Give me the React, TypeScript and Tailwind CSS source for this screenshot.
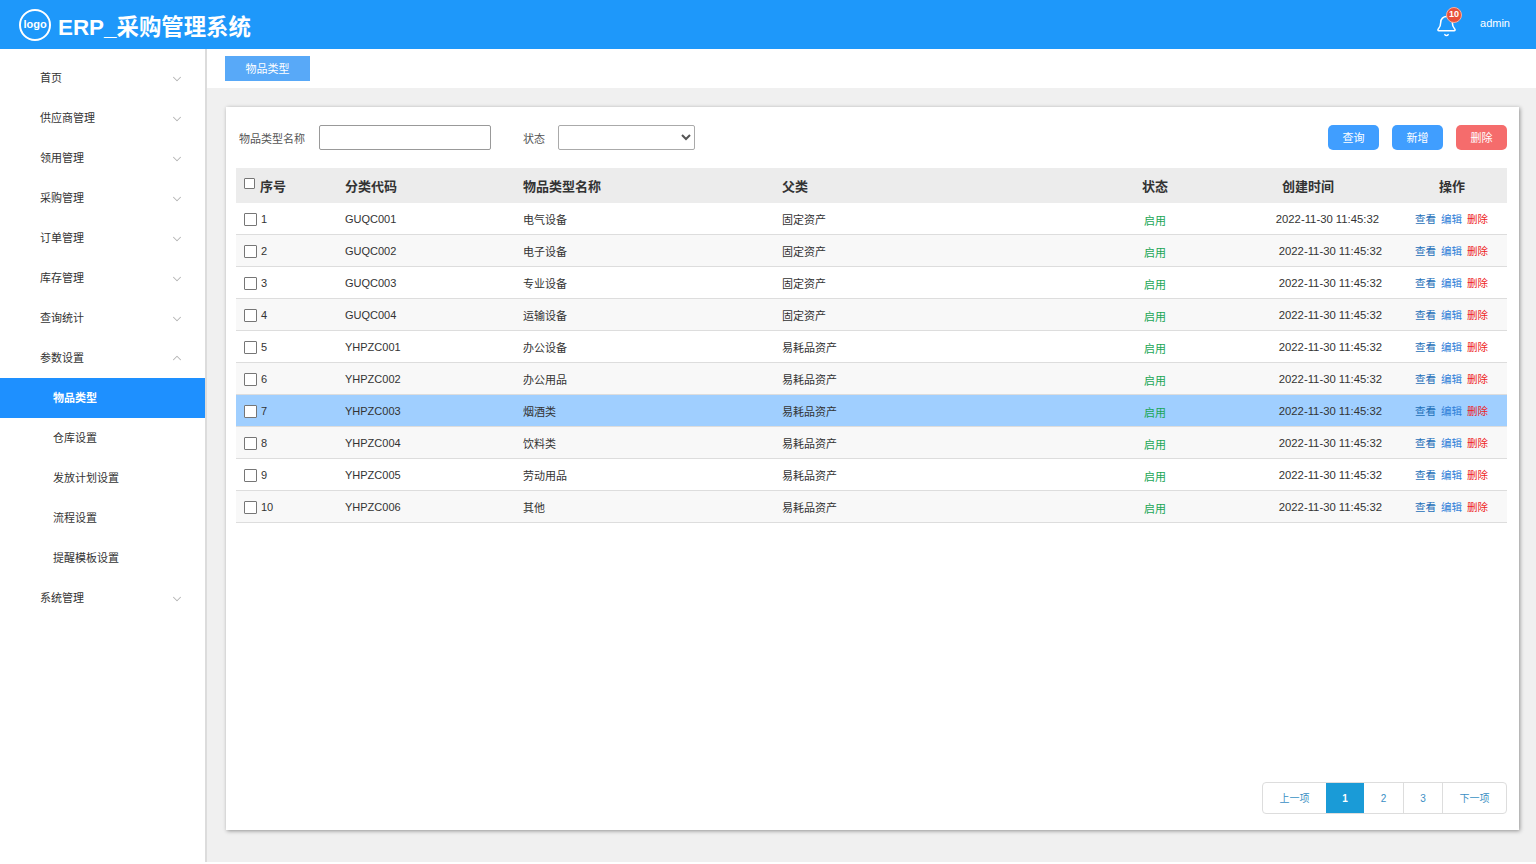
import { Bell, ChevronDown, ChevronUp } from "lucide-react";

const font = "font-['Liberation_Sans','Noto_Sans_CJK_SC',sans-serif]";

const menu: { label: string; open?: boolean; children?: string[] }[] = [
  { label: "首页" },
  { label: "供应商管理" },
  { label: "领用管理" },
  { label: "采购管理" },
  { label: "订单管理" },
  { label: "库存管理" },
  { label: "查询统计" },
  { label: "参数设置", open: true, children: ["物品类型", "仓库设置", "发放计划设置", "流程设置", "提醒模板设置"] },
  { label: "系统管理" },
];

const rows = [
  ["GUQC001", "电气设备", "固定资产"],
  ["GUQC002", "电子设备", "固定资产"],
  ["GUQC003", "专业设备", "固定资产"],
  ["GUQC004", "运输设备", "固定资产"],
  ["YHPZC001", "办公设备", "易耗品资产"],
  ["YHPZC002", "办公用品", "易耗品资产"],
  ["YHPZC003", "烟酒类", "易耗品资产"],
  ["YHPZC004", "饮料类", "易耗品资产"],
  ["YHPZC005", "劳动用品", "易耗品资产"],
  ["YHPZC006", "其他", "易耗品资产"],
];

function Sidebar() {
  return (
    <aside className="w-[207px] shrink-0 bg-white border-r-2 border-[#dcdcdc] pt-[9px]">
      {menu.map((m) => (
        <div key={m.label}>
          <div className="h-10 flex items-center justify-between pl-10 pr-[21px] text-[11px] text-[#333]">
            <span>{m.label}</span>
            {m.open ? (
              <ChevronUp className="w-[14px] h-[14px] text-[#b4b4b4]" strokeWidth={1.8} />
            ) : (
              <ChevronDown className="w-[14px] h-[14px] mt-[1px] text-[#b4b4b4]" strokeWidth={1.8} />
            )}
          </div>
          {m.children?.map((c, i) => (
            <div
              key={c}
              className={
                i === 0
                  ? "h-10 flex items-center pl-[53px] text-[11px] font-bold text-white bg-[#1e90ff]"
                  : "h-10 flex items-center pl-[53px] text-[11px] text-[#333]"
              }
            >
              {c}
            </div>
          ))}
        </div>
      ))}
    </aside>
  );
}

function Row({ r, i }: { r: string[]; i: number }) {
  const selected = i === 6;
  const bg = selected ? "bg-[#a0cfff]" : i % 2 === 1 ? "bg-[#f8f8f8]" : "bg-white";
  return (
    <div className={`h-8 flex items-center border-b border-[#dddddd] text-[11px] text-[#333] ${bg}`}>
      <div className="w-[109px] flex items-center pl-2 gap-[4px] pt-[1px]">
        <span className="w-[13px] h-[13px] border border-[#767676] rounded-[1px] bg-white" />
        <span className="pt-[1px]">{i + 1}</span>
      </div>
      <div className="w-[178px] pt-[1px]">{r[0]}</div>
      <div className="w-[259px] pt-[4px]">{r[1]}</div>
      <div className="w-[332px] pt-[3px]">{r[2]}</div>
      <div className="w-[82px] pt-[5px] text-[#19a654] text-center">启用</div>
      <div
        className={
          i === 0
            ? "w-[186px] text-right text-[11.3px] pt-[2px] pr-[3px]"
            : "w-[186px] text-right text-[11.3px] pt-[2px]"
        }
      >
        2022-11-30 11:45:32
      </div>
      <div className="flex-1 flex gap-[5px] pl-[33px] pt-[3px] text-[10.5px] whitespace-nowrap">
        <span className="text-[#1d6fb8]">查看</span>
        <span className="text-[#2f80d8]">编辑</span>
        <span className="text-[#ee2222]">删除</span>
      </div>
    </div>
  );
}

export default function App() {
  return (
    <div className={`${font} w-full h-[862px] flex flex-col overflow-hidden bg-white`}>
      <header className="h-[49px] shrink-0 bg-[#1e98fa] flex items-center text-white pl-[19px] pr-[26px]">
        <div className="w-[32px] h-[32px] rounded-full border-[2.5px] border-white flex items-center justify-center text-[11px] font-bold">
          logo
        </div>
        <div className="ml-[7px] text-[22.4px] font-bold pt-[7px]">ERP_采购管理系统</div>
        <div className="ml-auto relative mr-[22px]">
          <Bell className="w-[23px] h-[26px] mt-[3px]" strokeWidth={1.6} />
          <span className="absolute -top-[3px] left-[11px] w-[16px] h-[16px] rounded-full bg-[#e8503a] border border-[#f6b0a0] flex items-center justify-center text-[9px] font-bold">
            10
          </span>
        </div>
        <span className="text-[11px] -mt-[2px]">admin</span>
      </header>
      <div className="flex-1 flex min-h-0">
        <Sidebar />
        <main className="flex-1 bg-[#f0f0f0] flex flex-col min-w-0">
          <div className="h-[39px] shrink-0 bg-white pt-[7px] pl-[18px]">
            <div className="w-[85px] h-[25px] pt-[2px] bg-[#58a9f8] text-white text-[11px] flex items-center justify-center">
              物品类型
            </div>
          </div>
          <div className="mt-[19px] ml-[19px] mr-[17px] h-[723px] bg-white shadow-[1px_1px_4px_rgba(0,0,0,0.4)] pl-[10px] pr-[12px] pt-[18px] flex flex-col">
            <div className="h-[25px] flex items-center text-[11px] text-[#555] shrink-0">
              <span className="ml-[3px] w-[80px] pt-[3px]">物品类型名称</span>
              <input className="w-[172px] h-[25px] border border-[#999999] rounded-[2px] bg-white" />
              <span className="ml-[32px] w-[35px] pt-[3px]">状态</span>
              <select className="w-[137px] h-[25px] border border-[#aaaaaa] rounded-[2px] bg-white" />
              <button className="ml-auto w-[51px] h-[25px] pt-[2px] text-[11px] rounded-[5px] bg-[#409eff] text-white">查询</button>
              <button className="ml-[13px] w-[51px] h-[25px] pt-[2px] text-[11px] rounded-[5px] bg-[#409eff] text-white">新增</button>
              <button className="ml-[13px] w-[51px] h-[25px] pt-[2px] text-[11px] rounded-[5px] bg-[#f56c6c] text-white">删除</button>
            </div>
            <div className="mt-[18px] h-[35px] shrink-0 flex items-center bg-[#ececec] text-[13px] font-bold text-[#333]">
              <div className="w-[109px] flex items-center pl-2 gap-[5px]">
                <span className="w-[11px] h-[11px] border border-[#767676] rounded-[1px] bg-white -mt-[4px]" />
                <span className="pt-[2px]">序号</span>
              </div>
              <div className="w-[178px] pt-[2px]">分类代码</div>
              <div className="w-[259px] pt-[2px]">物品类型名称</div>
              <div className="w-[332px] pt-[2px]">父类</div>
              <div className="w-[82px] pt-[2px] text-center">状态</div>
              <div className="w-[138px] pt-[2px] text-right">创建时间</div>
              <div className="flex-1 pt-[2px] pl-[105px]">操作</div>
            </div>
            {rows.map((r, i) => (
              <Row key={r[0]} r={r} i={i} />
            ))}
            <div className="mt-auto mb-[16px] self-end h-[32px] flex border border-[#dddddd] rounded-[4px] bg-white text-[10px] text-[#3a8fc4] items-stretch">
              <div className="w-[63px] flex items-center justify-center">上一项</div>
              <div className="w-[38px] flex items-center justify-center bg-[#1a9bd7] text-white font-bold">1</div>
              <div className="w-[40px] flex items-center justify-center border-r border-[#dddddd]">2</div>
              <div className="w-[39px] flex items-center justify-center border-r border-[#dddddd]">3</div>
              <div className="w-[63px] flex items-center justify-center">下一项</div>
            </div>
          </div>
        </main>
      </div>
    </div>
  );
}
